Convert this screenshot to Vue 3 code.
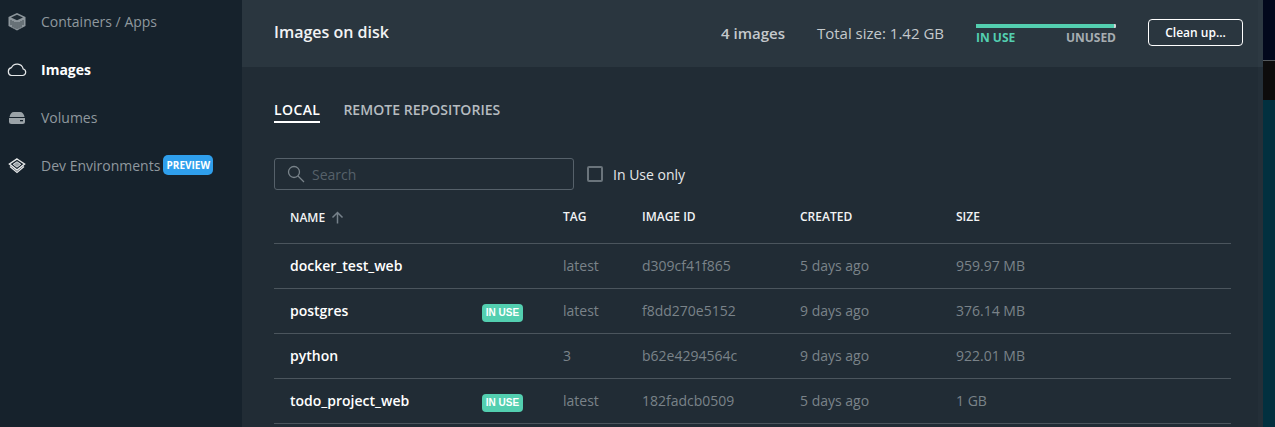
<script setup>
const rows = [
  { name: 'docker_test_web', use: false, tag: 'latest', id: 'd309cf41f865', created: '5 days ago', size: '959.97 MB' },
  { name: 'postgres', use: true, tag: 'latest', id: 'f8dd270e5152', created: '9 days ago', size: '376.14 MB' },
  { name: 'python', use: false, tag: '3', id: 'b62e4294564c', created: '9 days ago', size: '922.01 MB' },
  { name: 'todo_project_web', use: true, tag: 'latest', id: '182fadcb0509', created: '5 days ago', size: '1 GB' },
]
</script>

<template>
  <div class="app">
    <aside class="side">
      <div class="nav">
        <svg class="ico" viewBox="0 0 20 20">
          <path d="M10 2 18.500 6V15L10 19.500 1.500 15V6Z" fill="#8d969c"/>
          <path d="M10 3.800 16 6.500 10 9.200 4 6.500Z" fill="#1e2a33"/>
          <path d="M4 9v5M6 10v6.500M8 11v6.500M10 11v7M12 11v6.500M14 10v6.500M16 9v5" stroke="#3a454d" stroke-width=".9"/>
        </svg>
        <span>Containers / Apps</span>
      </div>
      <div class="nav on">
        <svg class="ico" viewBox="0 0 20 20"><path d="M4.500 16.500h11a3.300 3.300 0 0 0 .7-6.500 6.300 6.300 0 0 0-11.800-1.300A4 4 0 0 0 4.500 16.500Z" fill="none" stroke="#e6e9ea" stroke-width="1.200"/></svg>
        <span>Images</span>
      </div>
      <div class="nav">
        <svg class="ico" viewBox="0 0 20 20">
          <path d="M2.500 10C3 7 4.500 5 7 5h6c2.500 0 4 2 4.500 5Z" fill="#9aa2a7"/>
          <path d="M2 11h16v3.500a2.500 2.500 0 0 1-2.500 2.500h-11A2.500 2.500 0 0 1 2 14.500Z" fill="#9aa2a7"/>
          <rect x="13" y="13" width="3" height="1.300" fill="#16222c"/>
        </svg>
        <span>Volumes</span>
      </div>
      <div class="nav">
        <svg class="ico" viewBox="0 0 20 20">
          <path d="M10 4 17.500 9 10 15 2.500 9Z" fill="none" stroke="#e6e8e9" stroke-width="1.500"/>
          <path d="M10 6.800 13.800 9.300 10 12.200 6.200 9.300Z" fill="#9aa2a7" stroke="#e6e8e9" stroke-width=".9"/>
          <path d="M3 11.500 10 17.500 17 11.500" fill="none" stroke="#e6e8e9" stroke-width="1.300"/>
        </svg>
        <span>Dev Environments</span>
        <b class="preview">PREVIEW</b>
      </div>
    </aside>

    <main class="main">
      <header class="head">
        <h1>Images on disk</h1>
        <div class="stats">
          <span class="count">4 images</span>
          <span class="total">Total size: 1.42 GB</span>
          <div class="usage">
            <div class="bar"><i></i></div>
            <div class="labels"><b class="inuse">IN USE</b><b>UNUSED</b></div>
          </div>
          <button class="clean">Clean up...</button>
        </div>
      </header>

      <section class="content">
        <nav class="tabs">
          <span class="tab active">LOCAL</span>
          <span class="tab remote">REMOTE REPOSITORIES</span>
        </nav>

        <div class="filters">
          <label class="search">
            <svg viewBox="0 0 18 18" width="18" height="18"><circle cx="7" cy="7" r="5.500" fill="none" stroke="#79838a" stroke-width="1.300"/><path d="M11 11 17 17" stroke="#79838a" stroke-width="1.300"/></svg>
            <span>Search</span>
          </label>
          <span class="check"></span>
          <span class="only">In Use only</span>
        </div>

        <div class="row th">
          <div class="c-name">NAME
            <svg viewBox="0 0 13 13" width="13" height="13"><path d="M6.500 12.500V1.500M1.500 6.500l5-5 5 5" fill="none" stroke="#76818a" stroke-width="1.500"/></svg>
          </div>
          <div class="c-tag">TAG</div>
          <div class="c-id">IMAGE ID</div>
          <div class="c-created">CREATED</div>
          <div class="c-size">SIZE</div>
        </div>
        <div v-for="r in rows" :key="r.id" class="row td">
          <div class="c-name"><strong>{{ r.name }}</strong><em v-if="r.use">IN USE</em></div>
          <div class="c-tag">{{ r.tag }}</div>
          <div class="c-id">{{ r.id }}</div>
          <div class="c-created">{{ r.created }}</div>
          <div class="c-size">{{ r.size }}</div>
        </div>
      </section>
    </main>
    <div class="strip">
      <div class="s-navy"></div>
      <div class="s-black"></div>
      <div class="s-teal"></div>
    </div>
  </div>
</template>

<style>
html, body { margin: 0; background: #212c35; overflow: hidden; }
</style>

<style scoped>
.app { display: flex; height: 427px; width: 1275px; overflow: hidden; font-family: "Open Sans", sans-serif; font-size: 14px; color: #fff; }
.side { width: 242px; flex: none; background: #16222c; padding-top: 0; margin-top: -3px; }
.nav { height: 48px; display: flex; align-items: center; color: #8f989e; padding-left: 7px; }
.nav span { margin-left: 14px; }
.nav.on { color: #fff; font-weight: 700; }
.ico { width: 20px; height: 20px; flex: none; }
.preview { background: #2f9fec; color: #fff; font-size: 10px; font-weight: 700; width: 50px; text-align: center; height: 20px; line-height: 20px; border-radius: 5px; margin-left: 3px; }
.main { width: 1021px; flex: none; background: #212c35; position: relative; }
.main::after { content: ""; position: absolute; top: 0; bottom: 0; right: 0; width: 5px; background: rgba(255, 255, 255, .015); }
.head { height: 67px; background: #2a363f; display: flex; align-items: center; justify-content: space-between; padding: 0 20px 2px 32px; box-sizing: border-box; }
h1 { margin: 0 0 2px; font-size: 16px; font-weight: 600; color: #f2f3f4; }
.stats { display: flex; align-items: center; }
.count { font-weight: 600; color: #c4c9cc; font-size: 15px; margin-right: 32px; }
.total { color: #c4c9cc; font-size: 15px; margin-right: 32px; }
.usage { width: 140px; margin-right: 32px; padding-top: 4px; }
.bar { height: 4px; background: #d0d4d6; border-radius: 1px; }
.bar i { display: block; width: 138px; height: 4px; background: #53cfb0; }
.labels { display: flex; justify-content: space-between; font-size: 12px; margin-top: 1px; color: #a6adb1; }
.inuse { color: #53cfb0; }
.clean { width: 95px; height: 27px; padding: 0; border: 1px solid #fff; border-radius: 4px; background: transparent; color: #fff; font: 600 12px "Open Sans", sans-serif; }
.content { padding: 32px 32px 0; }
.tabs { display: flex; gap: 23px; height: 24px; }
.tab { font-weight: 600; font-size: 14px; color: #b6bcc0; height: 24px; line-height: 22px; box-sizing: border-box; }
.tab.active { color: #fff; border-bottom: 2px solid #fff; letter-spacing: .4px; }
.tab.remote { letter-spacing: .05px; }
.filters { display: flex; align-items: center; margin-top: 35px; height: 32px; }
.search { width: 300px; height: 32px; box-sizing: border-box; border: 1px solid #56616a; border-radius: 3px; display: flex; align-items: center; gap: 7px; padding-left: 12px; color: #56616a; font-size: 14px; }
.check { width: 16px; height: 16px; box-sizing: border-box; border: 2px solid #6a747b; border-radius: 2px; margin-left: 13px; }
.only { margin-left: 10px; color: #e6e8ea; }
.row { display: grid; grid-template-columns: 273px 79px 158px 156px 1fr; align-items: center; padding-left: 16px; width: 957px; box-sizing: border-box; border-bottom: 1px solid #4b555d; }
.th { height: 54px; font-size: 12px; font-weight: 600; color: #f2f3f4; }
.th .c-name { display: flex; align-items: center; gap: 6px; padding-top: 2px; }
.td { height: 45px; color: #7a8389; padding-bottom: 2px; }
.c-name { display: flex; align-items: center; position: relative; }
strong { font-weight: 600; color: #fff; }
em { position: absolute; left: 192px; top: 3px; background: #53cfb0; color: #fff; font: 700 10px "Liberation Sans", sans-serif; width: 41px; height: 18px; line-height: 18px; text-align: center; border-radius: 4px; }
.strip { width: 12px; flex: none; display: flex; flex-direction: column; }
.s-navy { height: 60px; background: #02081c; border-bottom: 1px solid #555a5e; }
.s-black { height: 39px; background: #0d0c0c; }
.s-teal { flex: 1; background: #02303f; }
</style>
